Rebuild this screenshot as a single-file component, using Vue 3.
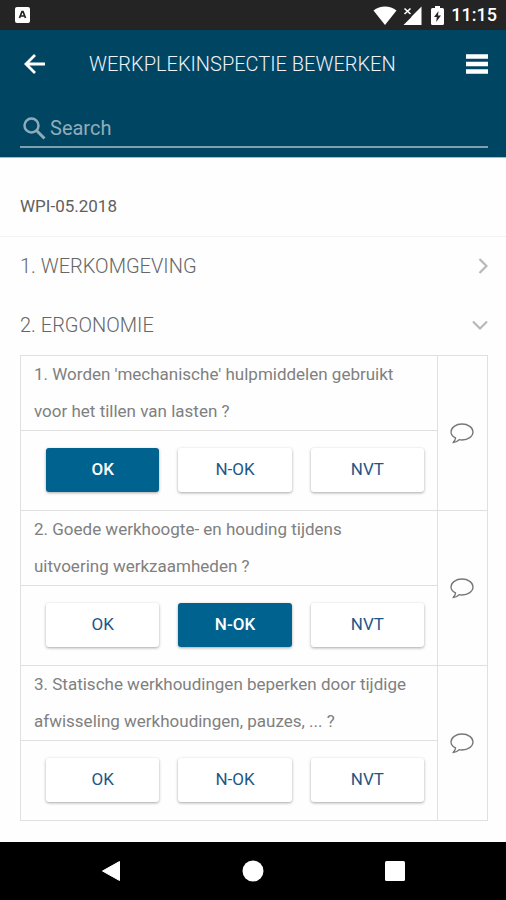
<script setup>
import { ref } from 'vue'

const search = ref('')
const answers = ['OK', 'N-OK', 'NVT']
const questions = ref([
  { id: 1, text: "Worden 'mechanische' hulpmiddelen gebruikt voor het tillen van lasten ?", answer: 'OK' },
  { id: 2, text: 'Goede werkhoogte- en houding tijdens uitvoering werkzaamheden ?', answer: 'N-OK' },
  { id: 3, text: 'Statische werkhoudingen beperken door tijdige afwisseling werkhoudingen, pauzes, ... ?', answer: null },
])
</script>

<template>
  <div class="screen">
    <div class="status-bar">
      <svg viewBox="0 0 15 16" width="15" height="16" aria-hidden="true">
        <rect width="15" height="16" rx="2" fill="#fff" />
        <path d="M4.500 11 7 4.500h1L10.500 11M5.500 9h4" fill="none" stroke="#222" stroke-width="1.700" />
      </svg>
      <div class="status-icons">
        <svg viewBox="0 0 24 19" width="24" height="19" aria-hidden="true">
          <path d="M.5 4.500C7-1 17-1 23.500 4.500L12 19z" fill="#fff" />
        </svg>
        <svg viewBox="0 0 19 19" width="19" height="19" aria-hidden="true">
          <path d="M18.500.500V19H.500L8.500 11V10.500z" fill="#fff" />
          <path d="m1.500 2.500 6 5.500m0-5.500-6 5.500" stroke="#fff" stroke-width="1.600" />
        </svg>
        <svg class="battery" viewBox="0 0 13 19" width="13" height="19" aria-hidden="true">
          <path d="M4 0h5v2h2.500q1.500 0 1.500 1.500v14q0 1.500-1.500 1.500h-10Q0 19 0 17.500v-14Q0 2 1.500 2H4z" fill="#fff" />
          <path d="M7.500 5 3 11h2.800l-.6 5L10 9.500H7z" fill="#242424" />
        </svg>
        <span class="clock">11:15</span>
      </div>
    </div>

    <header class="header">
      <div class="title-row">
        <button class="icon-button" type="button" aria-label="Terug">
          <svg viewBox="0 0 22 20" width="22" height="20">
            <path d="M21 10H2M11 1 2 10l9 9" fill="none" stroke="#fff" stroke-width="2.800" />
          </svg>
        </button>
        <h1 class="title">WERKPLEKINSPECTIE BEWERKEN</h1>
        <button class="icon-button" type="button" aria-label="Menu">
          <svg viewBox="0 0 22 20" width="22" height="20">
            <path d="M0 2.500h22M0 10h22M0 17.500h22" stroke="#fff" stroke-width="4.400" />
          </svg>
        </button>
      </div>
      <label class="search">
        <svg viewBox="0 0 23 23" width="23" height="23" aria-hidden="true">
          <circle cx="8.500" cy="8.500" r="7" fill="none" stroke="#8dabb9" stroke-width="2.500" />
          <path d="m13.500 13.500 8 8" stroke="#8dabb9" stroke-width="3" />
        </svg>
        <input v-model="search" class="search-input" type="text" placeholder="Search" aria-label="Search" />
      </label>
    </header>

    <main class="content">
      <h2 class="reference">WPI-05.2018</h2>
      <button class="section" type="button" aria-expanded="false">
        <span>1. WERKOMGEVING</span>
        <svg viewBox="0 0 10 16" width="10" height="16" aria-hidden="true">
          <path d="m1.500 1 7 7-7 7" fill="none" stroke="#b8b8b8" stroke-width="2.200" />
        </svg>
      </button>
      <button class="section" type="button" aria-expanded="true">
        <span>2. ERGONOMIE</span>
        <svg viewBox="0 0 16 10" width="16" height="10" aria-hidden="true">
          <path d="m1 1.500 7 7 7-7" fill="none" stroke="#b8b8b8" stroke-width="2.200" />
        </svg>
      </button>

      <div class="questions">
        <section v-for="question in questions" :key="question.id" class="question">
          <div class="question-body">
            <p class="question-text">{{ question.id }}. {{ question.text }}</p>
            <div class="answers">
              <button
                v-for="answer in answers"
                :key="answer"
                class="answer"
                :class="{ selected: question.answer === answer }"
                type="button"
                :aria-pressed="question.answer === answer"
                @click="question.answer = answer"
              >{{ answer }}</button>
            </div>
          </div>
          <button class="comment" type="button" aria-label="Opmerking">
            <svg viewBox="0 0 24 21" width="24" height="21">
              <path d="M5.600 14.900C2.700 13.500 1 11.400 1 9c0-4.400 4.900-8 11-8s11 3.600 11 8-4.900 8-11 8c-1 0-2-.1-2.900-.3-1.500 1.500-3.600 2.700-6.100 2.900 1.500-1.500 2.500-3 2.600-4.700z" fill="none" stroke="#777" stroke-width="1.300" stroke-linejoin="round" />
            </svg>
          </button>
        </section>
      </div>
    </main>

    <nav class="nav-bar">
      <button class="nav-button" type="button" aria-label="Vorige">
        <svg viewBox="0 0 20 22" width="20" height="22"><path d="M18.500 1.500v19L1.500 11z" fill="#fff" stroke="#fff" stroke-linejoin="round" /></svg>
      </button>
      <button class="nav-button" type="button" aria-label="Startscherm">
        <svg viewBox="0 0 22 22" width="22" height="22"><circle cx="11" cy="11" r="10.500" fill="#fff" /></svg>
      </button>
      <button class="nav-button" type="button" aria-label="Overzicht">
        <svg viewBox="0 0 20 20" width="20" height="20"><rect width="20" height="20" rx="1.500" fill="#fff" /></svg>
      </button>
    </nav>
  </div>
</template>

<style>
body {
  margin: 0;
  background: #fefefe;
}
</style>

<style scoped>
.screen {
  display: flex;
  flex-direction: column;
  min-height: 100vh;
  color: #666;
  font-family: Roboto, "Liberation Sans", sans-serif;
}

.screen * {
  box-sizing: border-box;
}

button {
  padding: 0;
  border: 0;
  background: none;
  color: inherit;
  font: inherit;
  cursor: pointer;
}

svg {
  display: block;
  flex: none;
}

.status-bar {
  display: flex;
  align-items: center;
  justify-content: space-between;
  height: 30px;
  padding: 0 9px 0 15px;
  background: #242424;
}

.status-icons {
  display: flex;
  align-items: center;
  gap: 6px;
}

.battery {
  margin: 0 1px 0 3px;
}

.clock {
  color: #fff;
  font-size: 18px;
  font-weight: 500;
  line-height: 30px;
}

.header {
  padding: 12px 18px 9px 20px;
  border-bottom: 1px solid #a9bcc5;
  background: #004663;
}

.title-row {
  display: flex;
  align-items: center;
  height: 44px;
}

.icon-button {
  display: flex;
  align-items: center;
  justify-content: center;
  width: 30px;
  height: 44px;
}

.icon-button:last-child {
  width: 22px;
}

.title {
  flex: 1;
  margin: 0;
  padding-left: 39px;
  color: #f0f1f9;
  font-size: 20px;
  font-weight: 300;
  line-height: 24px;
}

.search {
  display: flex;
  align-items: center;
  gap: 4px;
  height: 42px;
  margin-top: 20px;
  padding: 4px 0 0 3px;
  border-bottom: 2px solid #7f9eae;
}

.search-input {
  flex: 1;
  min-width: 0;
  padding: 0;
  border: 0;
  outline: 0;
  background: none;
  color: #fff;
  font: 400 20px/24px Roboto, "Liberation Sans", sans-serif;
}

.search-input::placeholder {
  color: #91adba;
  opacity: 1;
}

.content {
  flex: 1;
}

.reference {
  margin: 0;
  padding: 36px 20px 18px;
  border-bottom: 1px solid #f2f2f2;
  color: #606060;
  font-size: 17px;
  font-weight: 400;
  line-height: 24px;
}

.section {
  display: flex;
  align-items: center;
  justify-content: space-between;
  width: 100%;
  height: 59px;
  padding: 0 18px 2px 20px;
  font-size: 20px;
  font-weight: 300;
  line-height: 24px;
}

.questions {
  margin: 0 18px 21px 20px;
  border: 1px solid #e0e0e0;
}

.question {
  display: flex;
}

.question + .question {
  border-top: 1px solid #e0e0e0;
}

.question-body {
  flex: 1;
}

.question-text {
  margin: 0;
  padding: 0 20px 0 13px;
  color: #808080;
  font-size: 17px;
  line-height: 37px;
}

.answers {
  display: grid;
  grid-template-columns: repeat(3, 1fr);
  gap: 19px;
  padding: 17px 13px 18px 25px;
  border-top: 1px solid #e0e0e0;
}

.answer {
  height: 44px;
  padding-bottom: 2px;
  border-radius: 3px;
  background: #fff;
  box-shadow: 0 1px 3px rgba(0, 0, 0, 0.35);
  color: #1f5687;
  font-size: 17px;
}

.answer.selected {
  background: #00628f;
  color: #fff;
  font-weight: 500;
}

.comment {
  display: flex;
  align-items: center;
  justify-content: center;
  width: 50px;
  padding-right: 2px;
  border-left: 1px solid #e0e0e0;
}

.nav-bar {
  display: flex;
  align-items: center;
  justify-content: center;
  height: 58px;
  background: #000;
}

.nav-button {
  display: flex;
  align-items: center;
  justify-content: center;
  flex: 0 1 142px;
  height: 58px;
}
</style>
